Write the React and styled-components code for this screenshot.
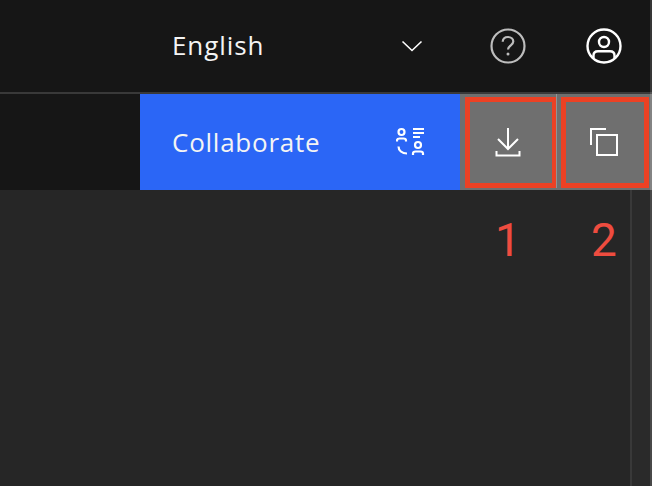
import React from 'react';
import styled, { createGlobalStyle } from 'styled-components';

const Global = createGlobalStyle`
  html, body {
    margin: 0;
    height: 100%;
    background: #262626;
    overflow: hidden;
  }
  #root {
    height: 100%;
  }
`;

const Page = styled.div`
  position: relative;
  width: 652px;
  height: 486px;
  display: flex;
  flex-direction: column;
  background: #262626;
  font-family: "Open Sans", Inter, sans-serif;
  color: #f4f4f4;
`;

const Header = styled.header`
  height: 92px;
  display: flex;
  justify-content: flex-end;
  background: #161616;
  border-bottom: 2px solid #393939;
`;

const Language = styled.div`
  width: 320px;
  box-sizing: border-box;
  padding: 0 37px 0 32px;
  display: flex;
  align-items: center;
  justify-content: space-between;
  font-size: 26px;
  letter-spacing: 0.9px;
`;

const LanguageName = styled.span`
  margin-top: -3px;
`;

const HeaderButton = styled.div`
  width: 96px;
  display: flex;
  align-items: center;
  justify-content: center;
`;

const Toolbar = styled.div`
  height: 96px;
  display: flex;
  justify-content: flex-end;
  background: #161616;
`;

const Collaborate = styled.div`
  width: 320px;
  box-sizing: border-box;
  padding: 0 32px;
  display: flex;
  align-items: center;
  justify-content: space-between;
  background: #2b66f6;
  font-size: 26px;
  letter-spacing: 0.75px;
`;

const ToolButton = styled.div`
  position: relative;
  width: 96px;
  display: flex;
  align-items: center;
  justify-content: center;
  background: #6f6f6f;
`;

const Marker = styled.div`
  position: absolute;
  top: 3px;
  left: ${p => p.$left}px;
  width: ${p => p.$width}px;
  height: 91px;
  box-sizing: border-box;
  border: 5px solid #ec4124;
`;

const Seam = styled.div`
  position: absolute;
  top: 0;
  left: 0;
  width: 1px;
  height: 94px;
  background: #939393;
`;

const Body = styled.main`
  flex: 1;
  display: flex;
  justify-content: flex-end;
`;

const Numbers = styled.div`
  display: flex;
  height: 100px;
  margin-top: 24px;
  font-family: Roboto, "Liberation Sans", sans-serif;
  font-size: 46px;
  line-height: 53px;
  color: #ee4c3f;
`;

const Number = styled.div`
  width: 96px;
  text-align: center;
`;

const Rail = styled.div`
  position: absolute;
  top: 190px;
  bottom: 0;
  left: 630px;
  right: 0;
  border-left: 2px solid #393939;
  background: #2a2a2a;
`;

const EdgeLine = styled.div`
  position: absolute;
  top: 0;
  bottom: 0;
  right: 0;
  width: 2px;
  background: rgba(255, 255, 255, 0.14);
`;

const Icon = styled.svg`
  display: block;
  fill: none;
  stroke: ${p => p.$color || '#fff'};
  stroke-width: ${p => p.$weight || 2};
`;

const Chevron = () => (
  <Icon width="22" height="12" viewBox="0 0 22 12" $weight={1.6}>
    <path d="M1.5 1.5 L11 10.5 L20.5 1.5" />
  </Icon>
);

const Help = () => (
  <Icon width="38" height="38" viewBox="0 0 38 38" $color="#bdbdbd" $weight={2.2}>
    <circle cx="19" cy="19" r="16.5" />
    <path d="M13.7 14.8 C13.9 11.6 16.2 10 19 10 C22 10 24.3 11.9 24.3 14.6 C24.3 18.2 19 18.4 19 22.6" />
    <circle cx="19" cy="27" r="1.5" fill="#bdbdbd" stroke="none" />
  </Icon>
);

const User = () => (
  <Icon width="38" height="38" viewBox="0 0 38 38" $weight={2.4}>
    <circle cx="19" cy="19" r="16.5" />
    <circle cx="19" cy="15" r="5" />
    <path d="M8.5 31 V28.500 C8.500 25.500 10.500 24.200 13 24.200 H25 C27.500 24.200 29.500 25.500 29.500 28.500 V31" />
  </Icon>
);

const CollabIcon = () => (
  <Icon width="32" height="32" viewBox="0 0 32 32" $weight={2.2}>
    <circle cx="5.500" cy="6" r="3" />
    <path d="M1 15.500 V14.500 C1 13 2 12.500 3.500 12.500 H7.500 C9 12.500 10 13 10 14.500 V15.500" />
    <path d="M17 3 H28 M17 7 H28 M17 11 H24" />
    <circle cx="22" cy="19" r="3" />
    <path d="M17 29 V27.500 C17 26 18 25.500 19.500 25.500 H24.500 C26 25.500 27 26 27 27.500 V29" />
    <path d="M2.500 20.500 C2.500 24.500 6 27.500 11 27.500" />
  </Icon>
);

const Download = () => (
  <Icon width="26" height="30" viewBox="0 0 26 30">
    <path d="M13 1 V22 M3 12 L13 22 L23 12" />
    <path d="M1.500 24 V28.500 H24.500 V24" />
  </Icon>
);

const Copy = () => (
  <Icon width="30" height="30" viewBox="0 0 30 30">
    <path d="M17 2 H2 V18" />
    <rect x="8" y="8" width="20" height="20" />
  </Icon>
);

export default function App() {
  return (
    <Page>
      <Global />
      <Header>
        <Language>
          <LanguageName>English</LanguageName>
          <Chevron />
        </Language>
        <HeaderButton><Help /></HeaderButton>
        <HeaderButton><User /></HeaderButton>
      </Header>
      <Toolbar>
        <Collaborate>
          Collaborate
          <CollabIcon />
        </Collaborate>
        <ToolButton>
          <Download />
          <Marker $left={5} $width={92} />
        </ToolButton>
        <ToolButton>
          <Seam />
          <Copy />
          <Marker $left={5} $width={88} />
        </ToolButton>
      </Toolbar>
      <Body>
        <Numbers>
          <Number>1</Number>
          <Number>2</Number>
        </Numbers>
        <Rail />
      </Body>
      <EdgeLine />
    </Page>
  );
}
